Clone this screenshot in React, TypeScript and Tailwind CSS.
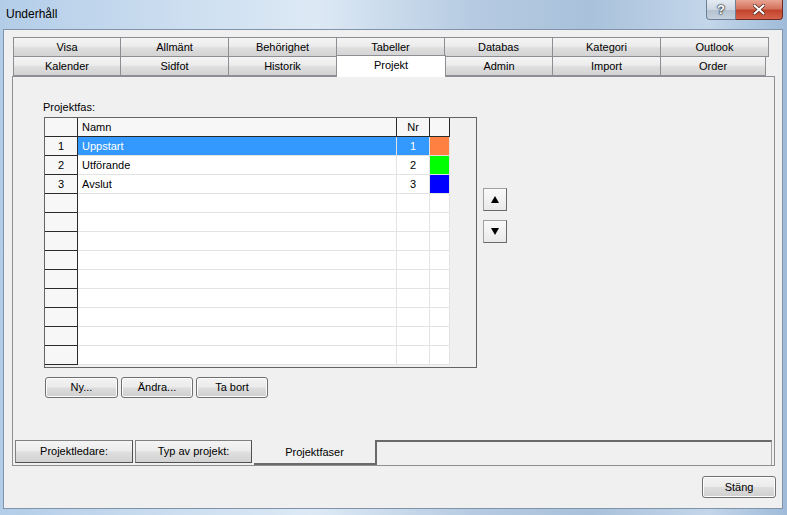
import React from 'react'

const topTabs = [
  { label: 'Visa', w: 'w-[108px]' },
  { label: 'Allmänt', w: 'w-[109px]' },
  { label: 'Behörighet', w: 'w-[109px]' },
  { label: 'Tabeller', w: 'w-[109px]' },
  { label: 'Databas', w: 'w-[109px]' },
  { label: 'Kategori', w: 'w-[109px]' },
  { label: 'Outlook', w: 'w-[109px]' },
]

const bottomTabs = [
  { label: 'Kalender', w: 'w-[108px]' },
  { label: 'Sidfot', w: 'w-[109px]' },
  { label: 'Historik', w: 'w-[109px]' },
  { label: 'Projekt', w: 'w-[110px]', active: true },
  { label: 'Admin', w: 'w-[108px]' },
  { label: 'Import', w: 'w-[109px]' },
  { label: 'Order', w: 'w-[106px]' },
]

const phases = [
  { nr: 1, name: 'Uppstart', color: 'bg-[#ff8040]', selected: true },
  { nr: 2, name: 'Utförande', color: 'bg-[#00ff00]' },
  { nr: 3, name: 'Avslut', color: 'bg-[#0000ff]' },
]

const tabBg =
  'bg-[linear-gradient(#f4f4f4_0%,#ececec_45%,#dedede_55%,#d3d3d3_100%)]'
const btnBg =
  'bg-[linear-gradient(#f3f3f3_0%,#ebebeb_48%,#dddddd_52%,#cfcfcf_100%)]'

function Btn({ label, w, h = 'h-[21px]' }: { label: string; w: string; h?: string }) {
  return (
    <div
      className={`${w} ${h} ${btnBg} border border-[#707070] rounded-[3px] flex items-center justify-center text-[11px] text-black shadow-[inset_0_0_0_1px_#fcfcfc]`}
    >
      {label}
    </div>
  )
}

function ArrowBtn({ up }: { up?: boolean }) {
  return (
    <div className="w-[24px] h-[23px] bg-[linear-gradient(#fafafa,#e9e9e9)] border border-[#a0a0a0] border-r-[#696969] border-b-[#696969] flex items-center justify-center">
      <svg width="8" height="7" viewBox="0 0 8 7">
        {up ? <polygon points="4,0 8,7 0,7" fill="#000" /> : <polygon points="0,0 8,0 4,7" fill="#000" />}
      </svg>
    </div>
  )
}

export default function App() {
  const emptyRows = Array.from({ length: 9 })
  return (
    <div
      className="w-[787px] h-[515px] overflow-hidden relative bg-[linear-gradient(90deg,#b3cde8_0%,#c9dcef_20%,#dde9f5_40%,#b6cbe2_60%,#a9c1db_75%,#c3d6ea_90%,#9fbbd9_100%)]"
      style={{ fontFamily: '"Liberation Sans", Arial, sans-serif' }}
    >
      {/* Title bar */}
      <div className="h-[29px] flex items-start justify-between">
        <div className="pl-[6px] pt-[7px] text-[12px] text-black leading-[14px]">Underhåll</div>
        <div className="flex mr-[4px]">
          <div className="w-[30px] h-[20px] rounded-bl-[4px] border border-[#6d7f94] border-t-0 bg-[linear-gradient(#e4ebf2_0%,#cdd7e2_50%,#b3c1d0_51%,#c5d1de_100%)] flex items-center justify-center text-[13px] font-bold text-white [text-shadow:0_0_1px_#1f2d3d,0_0_2px_#1f2d3d,0_0_2px_#1f2d3d]">
            ?
          </div>
          <div className="w-[47px] h-[20px] rounded-br-[4px] border border-[#6e2a22] border-t-0 border-l-0 bg-[linear-gradient(#e8a493_0%,#d4735e_45%,#c2442c_55%,#d6634a_100%)] flex items-center justify-center">
            <svg width="12" height="11" viewBox="0 0 12 11">
              <path d="M1.5 1.5 L10.5 9.5 M10.5 1.5 L1.5 9.5" stroke="#3d1711" strokeWidth="3.4" strokeLinecap="round" />
              <path d="M1.5 1.5 L10.5 9.5 M10.5 1.5 L1.5 9.5" stroke="#fff" strokeWidth="2.2" strokeLinecap="round" />
            </svg>
          </div>
        </div>
      </div>

      {/* Client area */}
      <div className="ml-[3px] w-[780px] h-[480px] border border-[#8093a9] bg-[#f0f0f0] flex flex-col pl-[8px] pt-[7px] text-[11px] text-black">
        {/* Tab rows */}
        <div className="flex ml-[1px]">
          {topTabs.map((t, i) => (
            <div
              key={t.label}
              className={`${t.w} h-[20px] ${tabBg} border border-[#8c8e94] ${i > 0 ? '-ml-px' : ''} flex items-center justify-center leading-[13px]`}
            >
              {t.label}
            </div>
          ))}
        </div>
        <div className="flex ml-[1px] -mt-px items-start relative z-10">
          {bottomTabs.map((t, i) =>
            t.active ? (
              <div
                key={t.label}
                className={`${t.w} h-[22px] -mt-px bg-white border border-b-0 border-[#8c8e94] -ml-px flex items-start justify-center pt-[3px] leading-[13px]`}
              >
                {t.label}
              </div>
            ) : (
              <div
                key={t.label}
                className={`${t.w} h-[20px] ${tabBg} border border-[#8c8e94] ${i > 0 ? '-ml-px' : ''} flex items-center justify-center leading-[13px]`}
              >
                {t.label}
              </div>
            ),
          )}
        </div>

        {/* Tab panel */}
        <div className="w-[763px] h-[390px] -mt-px border border-[#8c8e94] bg-[#f0f0f0] flex flex-col">
          <div className="pl-[30px] pt-[24px] leading-[13px]">Projektfas:</div>

          <div className="flex items-start mt-[3px] ml-[31px]">
            {/* Grid */}
            <div className="w-[433px] h-[251px] border border-[#646464] bg-[#f0f0f0] overflow-hidden flex flex-col">
              {/* Header */}
              <div className="flex h-[19px] shrink-0">
                <div className="w-[33px] h-[19px] bg-[#f7f7f7] border-r border-b border-[#2a2a2a]" />
                <div className="w-[319px] h-[19px] bg-[#f7f7f7] border-r border-b border-[#2a2a2a] pl-[4px] flex items-center">Namn</div>
                <div className="w-[33px] h-[19px] bg-[#f7f7f7] border-r border-b border-[#2a2a2a] flex items-center justify-center">Nr</div>
                <div className="w-[20px] h-[19px] bg-[#f7f7f7] border-r border-b border-[#2a2a2a]" />
              </div>
              {phases.map((p) => (
                <div key={p.nr} className="flex h-[19px] shrink-0">
                  <div className="w-[33px] bg-[#f7f7f7] border-r border-b border-[#2a2a2a] flex items-center justify-center">{p.nr}</div>
                  <div
                    className={`w-[319px] border-r border-b border-[#e3e3e3] pl-[4px] flex items-center ${p.selected ? 'bg-[#3399ff] text-white' : 'bg-white'}`}
                  >
                    {p.name}
                  </div>
                  <div
                    className={`w-[33px] border-r border-b border-[#e3e3e3] flex items-center justify-center ${p.selected ? 'bg-[#3399ff] text-white' : 'bg-white'}`}
                  >
                    {p.nr}
                  </div>
                  <div className={`w-[20px] border-r border-b border-[#e3e3e3] ${p.color}`} />
                </div>
              ))}
              {emptyRows.map((_, i) => (
                <div key={i} className="flex h-[19px] shrink-0">
                  <div className="w-[33px] bg-[#f7f7f7] border-r border-b border-[#2a2a2a]" />
                  <div className="w-[319px] bg-white border-r border-b border-[#e3e3e3]" />
                  <div className="w-[33px] bg-white border-r border-b border-[#e3e3e3]" />
                  <div className="w-[20px] bg-white border-r border-b border-[#e3e3e3]" />
                </div>
              ))}
            </div>

            {/* Move buttons */}
            <div className="flex flex-col gap-[9px] ml-[6px] mt-[71px]">
              <ArrowBtn up />
              <ArrowBtn />
            </div>
          </div>

          {/* Action buttons */}
          <div className="flex gap-[3px] ml-[32px] mt-[9px]">
            <Btn label="Ny..." w="w-[73px]" />
            <Btn label="Ändra..." w="w-[72px]" />
            <Btn label="Ta bort" w="w-[72px]" />
          </div>

          <div className="flex-1" />

          {/* Bottom tab strip */}
          <div className="flex items-start h-[25px] pl-[2px]">
            <div className={`w-[118px] h-[23px] ${tabBg} border border-[#808080] border-r-[#505050] border-b-[#505050] flex items-center justify-center`}>
              Projektledare:
            </div>
            <div className={`w-[117px] h-[23px] ml-[2px] ${tabBg} border border-[#808080] border-r-[#505050] border-b-[#505050] flex items-center justify-center`}>
              Typ av projekt:
            </div>
            <div className="w-[121px] h-[25px] ml-[2px] bg-[#f0f0f0] border-b-2 border-[#6a6a6a] flex items-center justify-center pt-[2px]">
              Projektfaser
            </div>
            <div className="flex-1 h-[25px] mr-[2px] border-l-2 border-t-2 border-r border-[#6a6a6a] border-r-[#a0a0a0]" />
          </div>
        </div>

        <div className="flex justify-end mt-[10px] mr-[6px]">
          <Btn label="Stäng" w="w-[74px]" h="h-[22px]" />
        </div>
      </div>
    </div>
  )
}
